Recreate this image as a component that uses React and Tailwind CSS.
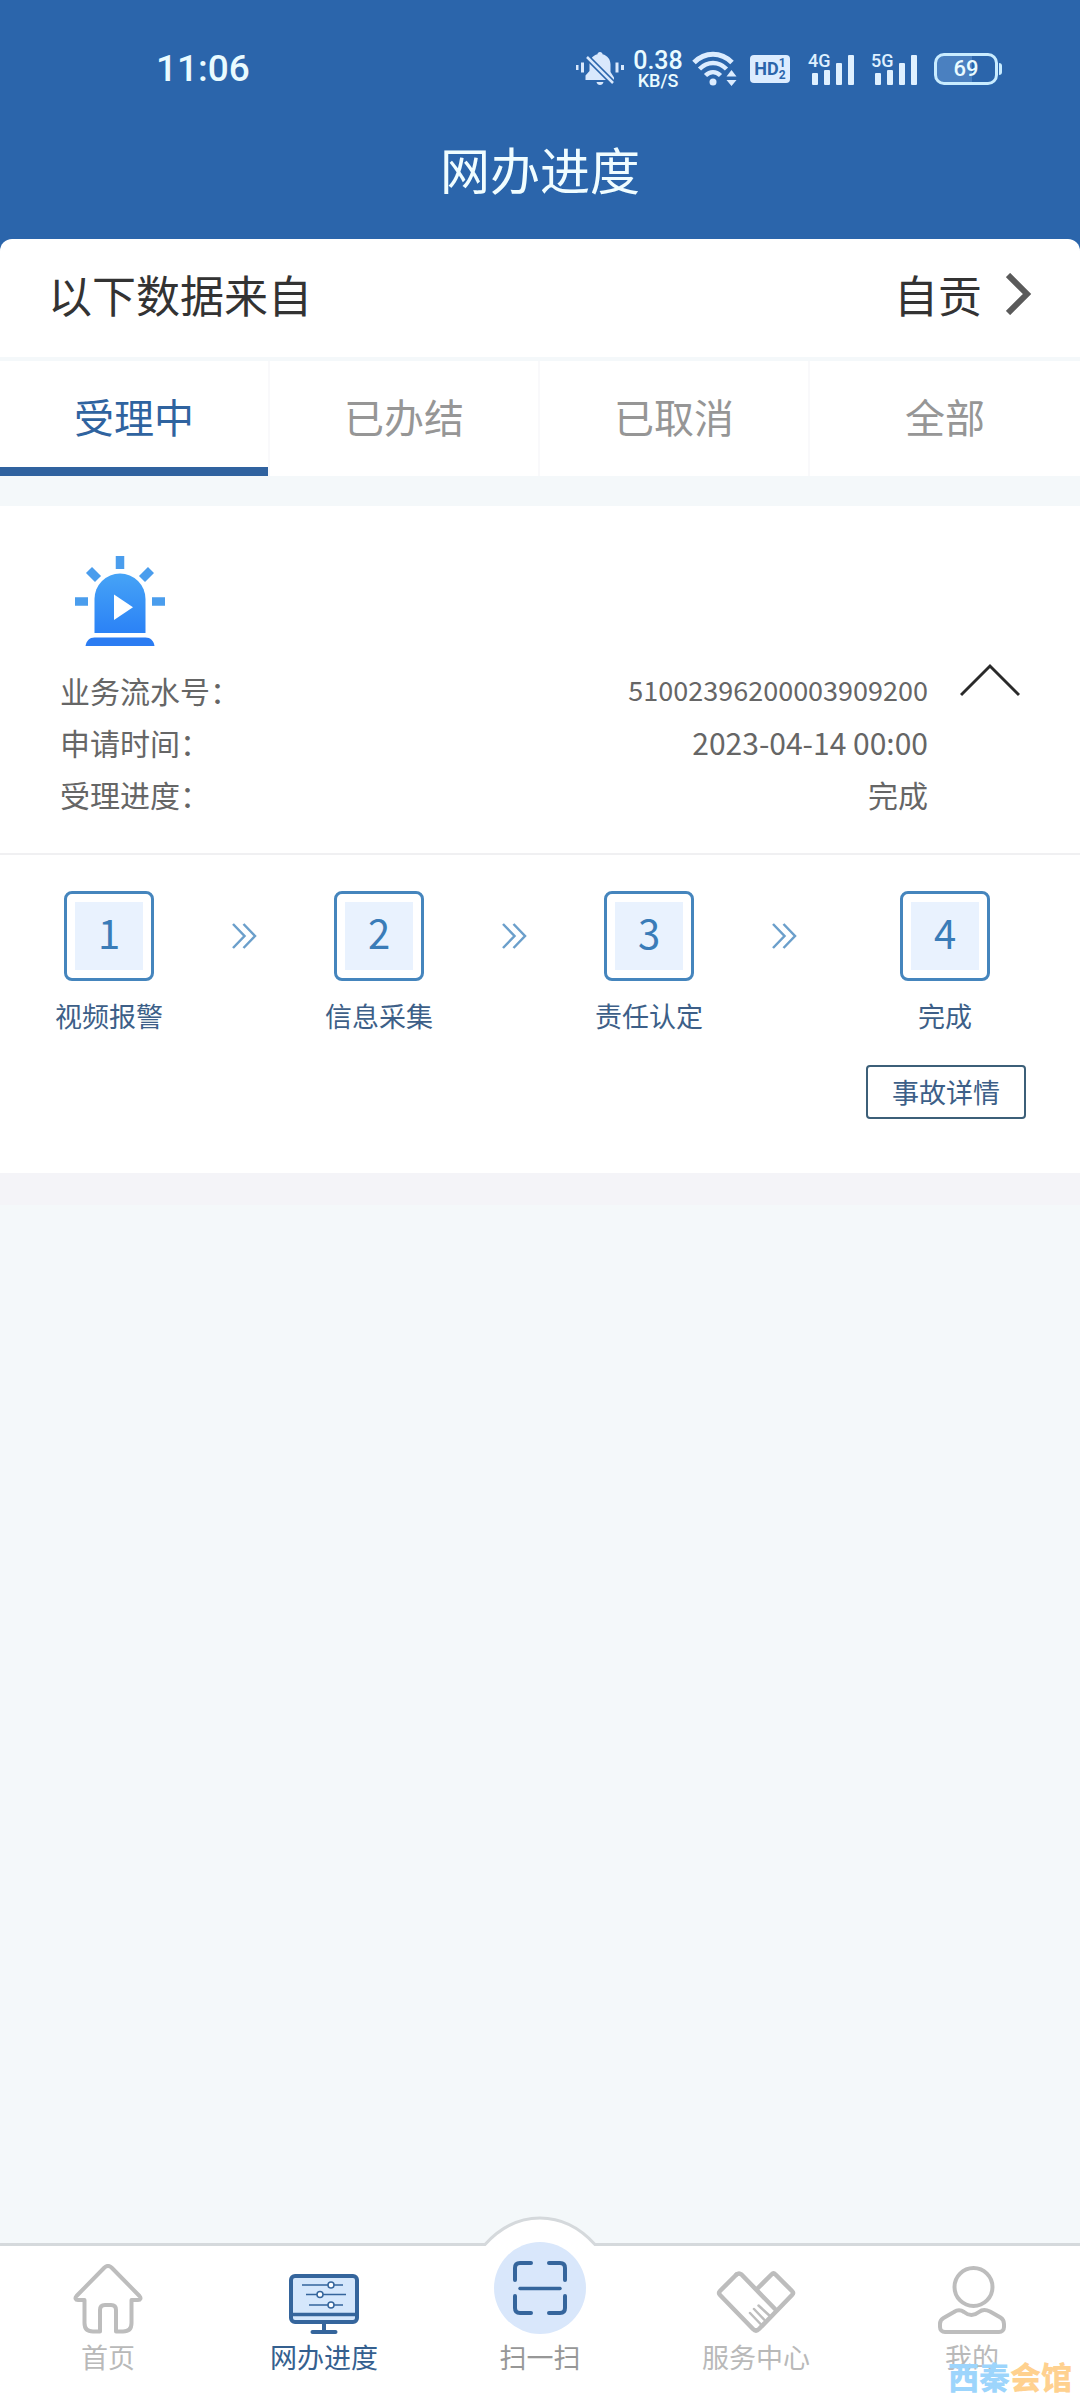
import React, { useState } from 'react';

const tabs = ['受理中', '已办结', '已取消', '全部'];
const steps = ['视频报警', '信息采集', '责任认定', '完成'];
const details = [
  { label: '业务流水号：', value: '51002396200003909200', size: 'text-[27px]' },
  { label: '申请时间：', value: '2023-04-14 00:00', size: 'text-[30px]' },
  { label: '受理进度：', value: '完成', size: 'text-[30px]' },
];

function BellOffIcon() {
  return (
    <svg width="48" height="36" viewBox="0 0 48 36" fill="#d9e8fc" aria-hidden="true">
      <path d="M24 1c1.500 0 2.500 1 2.500 2.200 5 1.300 8 5 8 10.300v7.500l3.500 5.500V29H9.500v-4.500L13.500 20v-6.500c0-5.300 3-9 8-10.300C21.500 2 22.500 1 24 1z" />
      <path d="M20.500 31h7c-.5 2-1.700 3-3.500 3s-3-1-3.500-3z" />
      <path d="M10 5l27 27" stroke="#2b65ab" strokeWidth="6" />
      <path d="M11 6l26 26" stroke="#d9e8fc" strokeWidth="2.500" />
      <path d="M1 14v5M6.500 11.500v10M41 11.500v10M46.500 14v5" stroke="#d9e8fc" strokeWidth="3" />
    </svg>
  );
}

function WifiIcon() {
  return (
    <svg width="46" height="36" viewBox="0 0 46 36" fill="none" stroke="#dcecff" aria-hidden="true">
      <path d="M2 11.500c11-11 27-11 38 0" strokeWidth="5" />
      <path d="M7.500 18c8-8 19-8 27 0" strokeWidth="4.500" />
      <path d="M13.500 24.500c4.500-4.500 10.500-4.500 15 0" strokeWidth="4.500" />
      <circle cx="21" cy="31" r="3.500" fill="#dcecff" stroke="none" />
      <path d="M39.500 19l5 6.500h-10zM39.500 35l5-6h-10z" fill="#dcecff" stroke="none" />
    </svg>
  );
}

function Signal({ label }) {
  return (
    <div className="relative h-8 w-[47px]">
      <svg width="47" height="32" viewBox="0 0 47 32" fill="#dff0ff" aria-hidden="true">
        <rect x="4" y="20" width="6" height="12" rx="1" />
        <rect x="16" y="17" width="6" height="15" rx="1" />
        <rect x="28" y="10" width="6" height="22" rx="1" />
        <rect x="40" y="2" width="6" height="30" rx="1" />
      </svg>
      <span className="absolute top-0 left-0 font-[Roboto] text-[18px] leading-4 font-medium text-[#dff0ff]">{label}</span>
    </div>
  );
}

function StatusBar() {
  return (
    <div className="flex h-[138px] items-center justify-between pr-[78px] pl-[156px] font-[Roboto,sans-serif] font-medium text-[#e9fbff]">
      <time className="text-[37px]">11:06</time>
      <div className="flex items-center">
        <BellOffIcon />
        <div className="ml-2 flex w-[52px] flex-col items-center">
          <span className="text-[25px] leading-6">0.38</span>
          <span className="text-[18px] leading-4">KB/S</span>
        </div>
        <div className="ml-2">
          <WifiIcon />
        </div>
        <div className="ml-3 flex h-7 w-10 items-center justify-center rounded bg-[#dcecff] text-[#2b65ab]">
          <span className="text-[18px] leading-7 font-bold">HD</span>
          <span className="flex flex-col text-xs leading-3 font-bold">
            <span>1</span>
            <span>2</span>
          </span>
        </div>
        <div className="ml-[18px] flex gap-4">
          <Signal label="4G" />
          <Signal label="5G" />
        </div>
        <div className="ml-4 flex items-center gap-px">
          <div className="flex h-8 w-[64px] items-center justify-center rounded-[10px] border-[3px] border-[#c9ecff] bg-linear-to-r from-[#4a80c0] from-60% to-[#2b65ab] to-60% text-[22px] leading-6">
            69
          </div>
          <div className="h-3 w-[3px] rounded-r bg-[#c9ecff]" />
        </div>
      </div>
    </div>
  );
}

function SirenIcon() {
  return (
    <svg width="90" height="90" viewBox="0 0 90 90" aria-hidden="true">
      <defs>
        <linearGradient id="siren" x1="0" y1="0" x2="0" y2="1">
          <stop offset="0" stopColor="#46a3f6" />
          <stop offset="1" stopColor="#2b82f6" />
        </linearGradient>
      </defs>
      <path d="M19.500 77V43a25.500 25.500 0 0 1 51 0v34z" fill="url(#siren)" />
      <path d="M39 38.500v25.500l19-12.750z" fill="#fff" />
      <path d="M10.500 90c1-5.500 4-8.500 9-8.500h51c5 0 8 3 9 8.500z" fill="#2b7cf2" />
      <path d="M45 0v13M0 45.500h13M77 45.500h13M14 14l9 9M76 14l-9 9" stroke="#4a9ded" strokeWidth="8.500" />
    </svg>
  );
}

function HomeIcon() {
  return (
    <svg width="70" height="70" viewBox="0 0 70 70" fill="none" stroke="#bdbdbd" strokeWidth="4" strokeLinejoin="round" aria-hidden="true">
      <path d="M31.500 3.500L3.500 32c-1.800 2-1 4 1.500 4h6.500v23c0 5.500 3 8.500 8.500 8.500h7V46c0-3.500 2-5 5-5h6c3 0 5 1.500 5 5v21.500h7c5.500 0 8.500-3 8.500-8.500V36H65c2.500 0 3.300-2 1.500-4l-28-28.500c-2.500-2.200-4.500-2.200-7 0z" />
    </svg>
  );
}

function MonitorIcon() {
  return (
    <svg width="70" height="60" viewBox="0 0 70 60" fill="none" stroke="#35659c" aria-hidden="true">
      <rect x="2" y="2" width="66" height="46" rx="4" fill="#d5e7fc" strokeWidth="4" />
      <path d="M2 40.500h66" strokeWidth="3.500" />
      <path d="M35 48v9" strokeWidth="4" />
      <path d="M23.500 58h23" strokeWidth="4" strokeLinecap="round" />
      <path d="M13 11h41M17 20.500h40M20 31h34" strokeWidth="1.500" />
      <g fill="#fff" strokeWidth="1.500">
        <circle cx="42" cy="11" r="3" />
        <circle cx="31" cy="20.500" r="3" />
        <circle cx="42" cy="31" r="3" />
      </g>
    </svg>
  );
}

function ScanIcon() {
  return (
    <svg width="54" height="54" viewBox="0 0 54 54" fill="none" stroke="#35659c" strokeWidth="4" strokeLinecap="round" aria-hidden="true">
      <path d="M18 2H7Q2 2 2 7v12M36 2h11q5 0 5 5v12M18 52H7q-5 0-5-5V35M36 52h11q5 0 5-5V35" />
      <path d="M7 27.500h40" strokeWidth="3.500" />
    </svg>
  );
}

function HandshakeIcon() {
  return (
    <svg width="80" height="64" viewBox="0 0 80 64" fill="none" stroke="#bdbdbd" strokeWidth="4.500" strokeLinejoin="round" strokeLinecap="round" aria-hidden="true">
      <path d="M20.500 4.500L4 21q-2 2 0 4l33 34q3 3 6 0l33-34q2-2 0-4L59.500 4.500q-2-2-4 0L41 19" />
      <path d="M20.500 4.500q2.500-2 5 0L59 39" />
      <path d="M34 43l11 11.500M38 39l11 11.500M42.500 35.500L55 47" strokeWidth="2.500" />
    </svg>
  );
}

function UserIcon() {
  return (
    <svg width="68" height="68" viewBox="0 0 68 68" fill="none" stroke="#bdbdbd" strokeWidth="4" strokeLinejoin="round" aria-hidden="true">
      <circle cx="35.500" cy="21" r="19" />
      <path d="M7 66h54c3 0 5-2 5-5v-3c0-3-1-5-3.500-6.500L52 45.500c-4-2-8-2-11 .5-5 4-10 4-15 0-3-2-7-2-10 0L5.500 52C3 53.500 2 55.500 2 58v3c0 3 2 5 5 5z" />
    </svg>
  );
}

const navItems = [
  { label: '首页', icon: <HomeIcon />, color: 'text-[#b9b9b9]' },
  { label: '网办进度', icon: <MonitorIcon />, color: 'text-[#35608f]' },
  { label: '扫一扫', icon: <ScanIcon />, color: 'text-[#979797]', center: true },
  { label: '服务中心', icon: <HandshakeIcon />, color: 'text-[#b9b9b9]' },
  { label: '我的', icon: <UserIcon />, color: 'text-[#b9b9b9]' },
];

function BottomNav() {
  return (
    <nav className="relative mt-auto grid grid-cols-5 border-t-[3px] border-[#d5d9dc] bg-white pb-5">
      {navItems.map(item => (
        <a key={item.label} href="#" className={`relative flex flex-col items-center ${item.color}`}>
          {item.center && (
            <svg className="absolute -top-[30px]" width="116" height="32" viewBox="0 0 116 32" aria-hidden="true">
              <path d="M0 32L3 28.500Q27 2 58 2t55 26.500l3 3.500z" fill="#fff" />
              <path d="M0 28.500h3Q27 2 58 2t55 26.500h3" fill="none" stroke="#d5d9dc" strokeWidth="3" />
            </svg>
          )}
          <span className="relative flex h-[88px] w-full items-end justify-center">
            {item.center ? (
              <span className="flex size-[92px] shrink-0 items-center justify-center rounded-full bg-[#d9e7fb]">{item.icon}</span>
            ) : (
              item.icon
            )}
          </span>
          <span className="text-[27px] leading-[46px]">{item.label}</span>
        </a>
      ))}
      <div className="pointer-events-none absolute right-2 bottom-1.5 text-[31px] leading-9 font-black text-[#9dd5fc]">
        西秦<span className="text-[#ffd18f]">会馆</span>
      </div>
    </nav>
  );
}

export default function App() {
  const [active, setActive] = useState(0);
  const [open, setOpen] = useState(true);

  return (
    <div className="flex min-h-screen flex-col bg-[#f4f8fa] font-['Noto_Sans_CJK_SC',sans-serif]">
      <header className="bg-[#2b65ab]">
        <StatusBar />
        <h1 className="pb-[41px] text-center text-[50px] leading-[60px] text-[#f0fdff]">网办进度</h1>
        <div className="flex h-[118px] items-center justify-between rounded-t-xl bg-white px-12 pb-2 text-[44px] text-[#333]">
          <span>以下数据来自</span>
          <button type="button" className="flex items-center gap-6">
            自贡
            <svg width="26" height="42" viewBox="0 0 26 42" fill="none" stroke="#5a5a5a" strokeWidth="6" aria-hidden="true">
              <path d="M2 2l19 19L2 40" />
            </svg>
          </button>
        </div>
      </header>

      <div role="tablist" className="mt-1 grid h-[115px] grid-cols-4 divide-x-2 divide-[#f9f9fb] bg-white">
        {tabs.map((tab, i) => (
          <button
            key={tab}
            type="button"
            role="tab"
            aria-selected={active === i}
            onClick={() => setActive(i)}
            className="flex flex-col"
          >
            <span
              className={`flex w-full flex-1 items-center justify-center border-b-[9px] pt-1 text-[40px] ${
                active === i ? 'border-[#30629f] text-[#2f639f]' : 'border-transparent text-[#969696]'
              }`}
            >
              {tab}
            </span>
          </button>
        ))}
      </div>

      <section className="mt-[30px] bg-white">
        <div className="flex items-center gap-8 border-b-2 border-[#f0f0f2] px-[60px]">
          <div className="flex-1 pt-[50px] pb-[33px]">
            <div className="mb-[18px] pl-[15px]">
              <SirenIcon />
            </div>
            <dl className="text-[#666]">
              {details.map(row => (
                <div key={row.label} className="flex justify-between leading-[52px]">
                  <dt className="text-[30px]">{row.label}</dt>
                  <dd className={row.size}>{row.value}</dd>
                </div>
              ))}
            </dl>
          </div>
          <button type="button" aria-label="收起" aria-expanded={open} onClick={() => setOpen(!open)}>
            <svg width="60" height="34" viewBox="0 0 60 34" fill="none" stroke="#2a2a2a" strokeWidth="3" aria-hidden="true">
              <path d="M1 32L30 3l29 29" />
            </svg>
          </button>
        </div>

        {open && (
          <div className="pt-9 pb-[54px]">
            <ol className="grid grid-cols-4">
              {steps.map((step, i) => (
                <li key={step} className="flex items-start">
                  <div className="flex flex-1 flex-col items-center">
                    <div className="flex size-[90px] rounded-lg border-[3px] border-[#4585bd] p-2">
                      <span className="flex flex-1 items-center justify-center bg-[#e9f2fe] pb-2 text-[40px] leading-none text-[#3a7cb8]">
                        {i + 1}
                      </span>
                    </div>
                    <span className="mt-[15px] text-[27px] leading-10 text-[#3d5f88]">{step}</span>
                  </div>
                  {i < steps.length - 1 && (
                    <div className="flex h-[90px] w-[52px] items-center justify-center">
                      <svg width="26" height="28" viewBox="0 0 26 28" fill="none" stroke="#6b9fcb" strokeWidth="2.500" aria-hidden="true">
                        <path d="M2 2l11.500 12L2 26M12.500 2L24 14 12.500 26" />
                      </svg>
                    </div>
                  )}
                </li>
              ))}
            </ol>
            <div className="mt-[29px] flex justify-end pr-[54px]">
              <button type="button" className="h-[54px] rounded border-2 border-[#3c5f78] px-6 text-[27px] leading-10 text-[#3d5f88]">
                事故详情
              </button>
            </div>
          </div>
        )}
      </section>
      <div className="h-8 bg-[#f4f4f8]" />

      <BottomNav />
    </div>
  );
}
